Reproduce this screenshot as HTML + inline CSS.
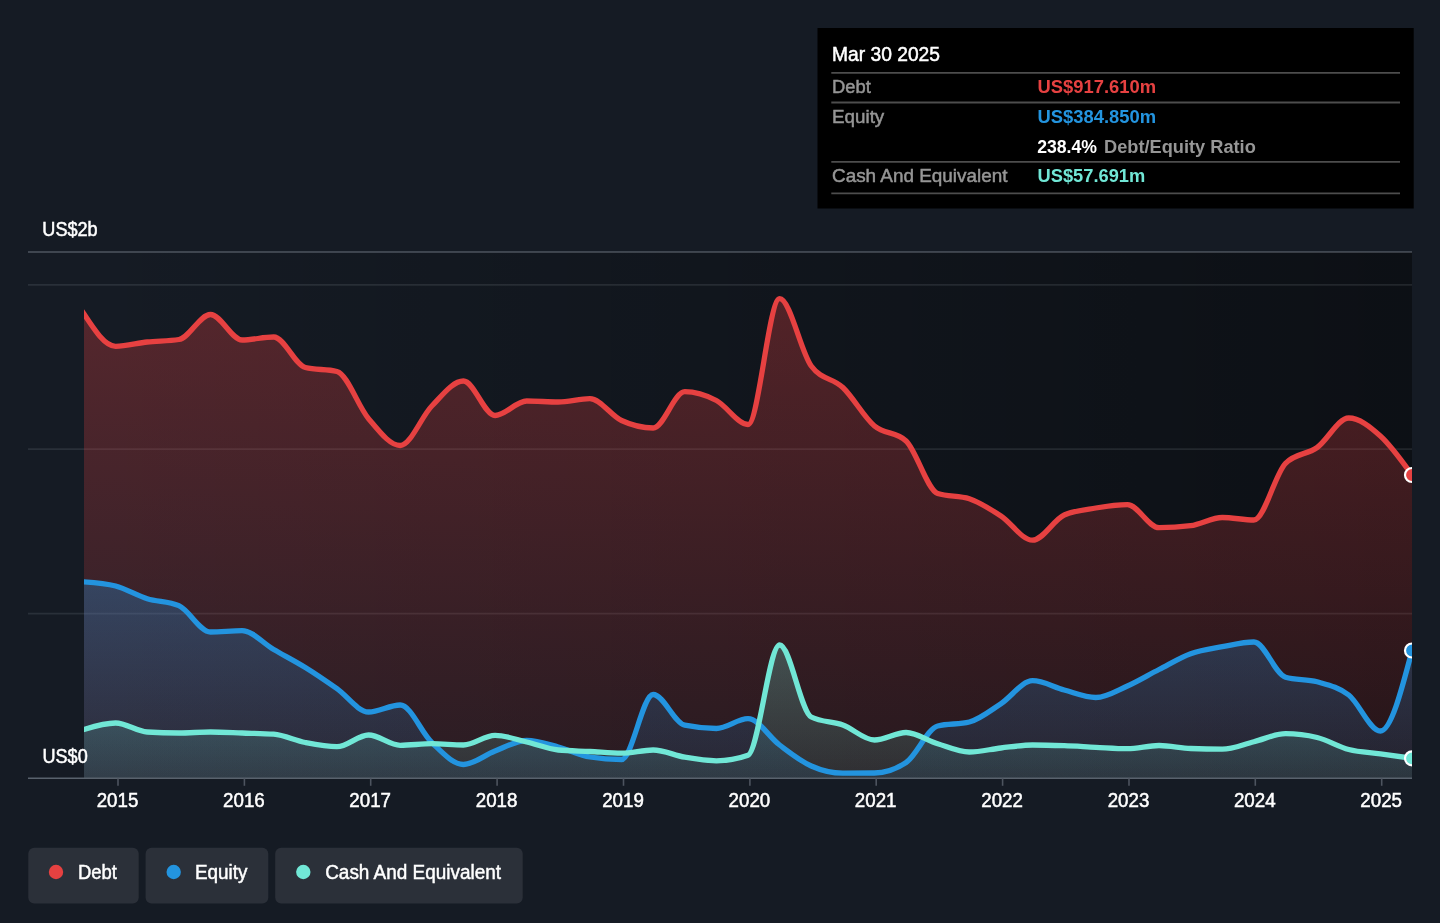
<!DOCTYPE html>
<html><head><meta charset="utf-8"><title>Debt to Equity History</title>
<style>
html,body{margin:0;padding:0;background:#151b24;}
body{width:1440px;height:923px;overflow:hidden;font-family:"Liberation Sans",sans-serif;}
svg{display:block;font-family:"Liberation Sans",sans-serif;will-change:transform;transform:translateZ(0);}
text{-webkit-font-smoothing:antialiased;}
.ax{fill:#ffffff;font-size:19.5px;stroke:#ffffff;stroke-width:0.5px;}
.lg{fill:#ffffff;font-size:19.4px;stroke:#ffffff;stroke-width:0.45px;}
.tl{fill:#969696;font-size:19.2px;stroke:#969696;stroke-width:0.5px;}
.tv{font-size:19.2px;font-weight:bold;}
</style></head>
<body>
<svg width="1440" height="923" viewBox="0 0 1440 923">
<defs>
<linearGradient id="pbg" x1="0" y1="0" x2="1" y2="0">
<stop offset="0" stop-color="#000" stop-opacity="0"/>
<stop offset="0.04" stop-color="#000" stop-opacity="0"/>
<stop offset="1" stop-color="#000" stop-opacity="0.42"/>
</linearGradient>
<linearGradient id="gd" gradientUnits="userSpaceOnUse" x1="0" y1="298" x2="0" y2="778">
<stop offset="0" stop-color="#e64141" stop-opacity="0.31"/>
<stop offset="1" stop-color="#e64141" stop-opacity="0.11"/>
</linearGradient>
<linearGradient id="ge" gradientUnits="userSpaceOnUse" x1="0" y1="582" x2="0" y2="778">
<stop offset="0" stop-color="#2394df" stop-opacity="0.30"/>
<stop offset="1" stop-color="#2394df" stop-opacity="0.10"/>
</linearGradient>
<linearGradient id="gc" gradientUnits="userSpaceOnUse" x1="0" y1="645" x2="0" y2="778">
<stop offset="0" stop-color="#71e7d6" stop-opacity="0.26"/>
<stop offset="1" stop-color="#71e7d6" stop-opacity="0.10"/>
</linearGradient>
<clipPath id="pc"><rect x="84" y="245" width="1328" height="540"/></clipPath>
</defs>
<rect x="0" y="0" width="1440" height="923" fill="#151b24"/>
<!-- plot bg -->
<rect x="28" y="252" width="1384" height="526" fill="url(#pbg)"/>
<!-- grid -->
<g stroke="#dfe8f5" stroke-width="1.8">
<line x1="28" x2="1412" y1="252" y2="252" stroke-opacity="0.21"/>
<line x1="28" x2="1412" y1="284.9" y2="284.9" stroke-opacity="0.10"/>
<line x1="28" x2="1412" y1="449.1" y2="449.1" stroke-opacity="0.10"/>
<line x1="28" x2="1412" y1="613.7" y2="613.7" stroke-opacity="0.10"/>
</g>
<g clip-path="url(#pc)">
<path d="M80.00,307.87L84.00,314.00C94.54,330.15 105.08,346.30 115.62,346.30C126.16,346.30 136.70,343.13 147.24,342.00C157.78,340.87 168.32,341.17 178.86,339.50C189.40,337.83 199.94,314.50 210.48,314.50C221.02,314.50 231.56,340.00 242.10,340.00C252.63,340.00 263.17,337.00 273.71,337.00C284.25,337.00 294.79,364.83 305.33,367.50C315.87,370.17 326.41,368.83 336.95,371.50C347.49,374.17 358.03,406.37 368.57,418.70C379.11,431.03 389.65,445.50 400.19,445.50C410.73,445.50 421.27,416.75 431.81,406.00C442.35,395.25 452.89,381.00 463.43,381.00C473.97,381.00 484.51,415.50 495.05,415.50C505.59,415.50 516.13,401.00 526.67,401.00C537.21,401.00 547.75,402.00 558.29,402.00C568.83,402.00 579.37,398.70 589.90,398.70C600.44,398.70 610.98,415.62 621.52,420.50C632.06,425.38 642.60,428.00 653.14,428.00C663.68,428.00 674.22,391.70 684.76,391.70C695.30,391.70 705.84,395.03 716.38,400.50C726.92,405.97 737.46,424.50 748.00,424.50C758.54,424.50 769.08,298.70 779.62,298.70C790.16,298.70 800.70,351.67 811.24,366.00C821.78,380.33 832.32,377.50 842.86,387.50C853.40,397.50 863.94,417.08 874.48,426.00C885.02,434.92 895.56,431.00 906.10,441.00C916.63,451.00 927.17,490.03 937.71,493.50C948.25,496.97 958.79,495.23 969.33,498.70C979.87,502.17 990.41,509.08 1000.95,516.00C1011.49,522.92 1022.03,540.20 1032.57,540.20C1043.11,540.20 1053.65,519.67 1064.19,515.00C1074.73,510.33 1085.27,509.72 1095.81,508.00C1106.35,506.28 1116.89,504.70 1127.43,504.70C1137.97,504.70 1148.51,527.70 1159.05,527.70C1169.59,527.70 1180.13,527.03 1190.67,525.70C1201.21,524.37 1211.75,517.50 1222.29,517.50C1232.83,517.50 1243.37,520.00 1253.90,520.00C1264.44,520.00 1274.98,473.83 1285.52,463.30C1296.06,452.77 1306.60,455.05 1317.14,447.50C1327.68,439.95 1338.22,418.00 1348.76,418.00C1359.30,418.00 1369.84,426.50 1380.38,436.00C1390.92,445.50 1401.46,460.25 1412.00,475.00L1412.00,778L84.00,778Z" fill="url(#gd)"/>
<path d="M80.00,581.53L84.00,581.80C94.54,582.50 105.08,583.20 115.62,586.00C126.16,588.80 136.70,595.42 147.24,598.70C157.78,601.98 168.32,601.03 178.86,605.70C189.40,610.37 199.94,632.00 210.48,632.00C221.02,632.00 231.56,630.70 242.10,630.70C252.63,630.70 263.17,643.37 273.71,649.50C284.25,655.63 294.79,660.97 305.33,667.50C315.87,674.03 326.41,681.28 336.95,688.70C347.49,696.12 358.03,712.00 368.57,712.00C379.11,712.00 389.65,705.00 400.19,705.00C410.73,705.00 421.27,732.58 431.81,742.50C442.35,752.42 452.89,764.50 463.43,764.50C473.97,764.50 484.51,755.00 495.05,751.00C505.59,747.00 516.13,740.50 526.67,740.50C537.21,740.50 547.75,744.25 558.29,747.00C568.83,749.75 579.37,755.33 589.90,757.00C600.44,758.67 610.98,759.50 621.52,759.50C632.06,759.50 642.60,694.50 653.14,694.50C663.68,694.50 674.22,723.00 684.76,725.20C695.30,727.40 705.84,728.50 716.38,728.50C726.92,728.50 737.46,718.70 748.00,718.70C758.54,718.70 769.08,737.12 779.62,745.00C790.16,752.88 800.70,761.30 811.24,766.00C821.78,770.70 832.32,773.20 842.86,773.20C853.40,773.20 863.94,773.13 874.48,773.00C885.02,772.87 895.56,769.50 906.10,762.50C916.63,755.50 927.17,728.67 937.71,726.00C948.25,723.33 958.79,724.67 969.33,722.00C979.87,719.33 990.41,710.58 1000.95,703.70C1011.49,696.82 1022.03,680.70 1032.57,680.70C1043.11,680.70 1053.65,687.20 1064.19,690.00C1074.73,692.80 1085.27,697.50 1095.81,697.50C1106.35,697.50 1116.89,690.67 1127.43,686.00C1137.97,681.33 1148.51,674.88 1159.05,669.50C1169.59,664.12 1180.13,657.50 1190.67,653.70C1201.21,649.90 1211.75,648.65 1222.29,646.70C1232.83,644.75 1243.37,642.00 1253.90,642.00C1264.44,642.00 1274.98,674.13 1285.52,677.20C1296.06,680.27 1306.60,678.83 1317.14,681.80C1327.68,684.77 1338.22,686.80 1348.76,695.00C1359.30,703.20 1369.84,731.00 1380.38,731.00C1390.92,731.00 1401.46,690.75 1412.00,650.50L1412.00,778L84.00,778Z" fill="url(#ge)"/>
<path d="M80.00,730.61L84.00,729.40C94.54,726.20 105.08,723.00 115.62,723.00C126.16,723.00 136.70,731.33 147.24,732.00C157.78,732.67 168.32,733.00 178.86,733.00C189.40,733.00 199.94,732.00 210.48,732.00C221.02,732.00 231.56,732.63 242.10,733.00C252.63,733.37 263.17,733.40 273.71,734.20C284.25,735.00 294.79,740.42 305.33,742.50C315.87,744.58 326.41,746.70 336.95,746.70C347.49,746.70 358.03,735.00 368.57,735.00C379.11,735.00 389.65,745.30 400.19,745.30C410.73,745.30 421.27,743.70 431.81,743.70C442.35,743.70 452.89,745.00 463.43,745.00C473.97,745.00 484.51,735.30 495.05,735.30C505.59,735.30 516.13,739.55 526.67,742.00C537.21,744.45 547.75,749.00 558.29,750.00C568.83,751.00 579.37,750.97 589.90,751.50C600.44,752.03 610.98,753.20 621.52,753.20C632.06,753.20 642.60,750.00 653.14,750.00C663.68,750.00 674.22,755.40 684.76,757.20C695.30,759.00 705.84,760.80 716.38,760.80C726.92,760.80 737.46,758.93 748.00,755.20C758.54,751.47 769.08,645.00 779.62,645.00C790.16,645.00 800.70,711.67 811.24,717.00C821.78,722.33 832.32,721.17 842.86,725.00C853.40,728.83 863.94,740.00 874.48,740.00C885.02,740.00 895.56,732.50 906.10,732.50C916.63,732.50 927.17,740.45 937.71,743.70C948.25,746.95 958.79,752.00 969.33,752.00C979.87,752.00 990.41,749.17 1000.95,748.00C1011.49,746.83 1022.03,745.00 1032.57,745.00C1043.11,745.00 1053.65,745.32 1064.19,745.70C1074.73,746.08 1085.27,746.80 1095.81,747.30C1106.35,747.80 1116.89,748.70 1127.43,748.70C1137.97,748.70 1148.51,745.50 1159.05,745.50C1169.59,745.50 1180.13,748.03 1190.67,748.50C1201.21,748.97 1211.75,749.20 1222.29,749.20C1232.83,749.20 1243.37,744.28 1253.90,741.70C1264.44,739.12 1274.98,733.70 1285.52,733.70C1296.06,733.70 1306.60,734.97 1317.14,737.50C1327.68,740.03 1338.22,746.78 1348.76,749.50C1359.30,752.22 1369.84,752.33 1380.38,753.80C1390.92,755.27 1401.46,756.78 1412.00,758.30L1412.00,778L84.00,778Z" fill="url(#gc)"/>
<path d="M80.00,307.87L84.00,314.00C94.54,330.15 105.08,346.30 115.62,346.30C126.16,346.30 136.70,343.13 147.24,342.00C157.78,340.87 168.32,341.17 178.86,339.50C189.40,337.83 199.94,314.50 210.48,314.50C221.02,314.50 231.56,340.00 242.10,340.00C252.63,340.00 263.17,337.00 273.71,337.00C284.25,337.00 294.79,364.83 305.33,367.50C315.87,370.17 326.41,368.83 336.95,371.50C347.49,374.17 358.03,406.37 368.57,418.70C379.11,431.03 389.65,445.50 400.19,445.50C410.73,445.50 421.27,416.75 431.81,406.00C442.35,395.25 452.89,381.00 463.43,381.00C473.97,381.00 484.51,415.50 495.05,415.50C505.59,415.50 516.13,401.00 526.67,401.00C537.21,401.00 547.75,402.00 558.29,402.00C568.83,402.00 579.37,398.70 589.90,398.70C600.44,398.70 610.98,415.62 621.52,420.50C632.06,425.38 642.60,428.00 653.14,428.00C663.68,428.00 674.22,391.70 684.76,391.70C695.30,391.70 705.84,395.03 716.38,400.50C726.92,405.97 737.46,424.50 748.00,424.50C758.54,424.50 769.08,298.70 779.62,298.70C790.16,298.70 800.70,351.67 811.24,366.00C821.78,380.33 832.32,377.50 842.86,387.50C853.40,397.50 863.94,417.08 874.48,426.00C885.02,434.92 895.56,431.00 906.10,441.00C916.63,451.00 927.17,490.03 937.71,493.50C948.25,496.97 958.79,495.23 969.33,498.70C979.87,502.17 990.41,509.08 1000.95,516.00C1011.49,522.92 1022.03,540.20 1032.57,540.20C1043.11,540.20 1053.65,519.67 1064.19,515.00C1074.73,510.33 1085.27,509.72 1095.81,508.00C1106.35,506.28 1116.89,504.70 1127.43,504.70C1137.97,504.70 1148.51,527.70 1159.05,527.70C1169.59,527.70 1180.13,527.03 1190.67,525.70C1201.21,524.37 1211.75,517.50 1222.29,517.50C1232.83,517.50 1243.37,520.00 1253.90,520.00C1264.44,520.00 1274.98,473.83 1285.52,463.30C1296.06,452.77 1306.60,455.05 1317.14,447.50C1327.68,439.95 1338.22,418.00 1348.76,418.00C1359.30,418.00 1369.84,426.50 1380.38,436.00C1390.92,445.50 1401.46,460.25 1412.00,475.00" fill="none" stroke="#e64141" stroke-width="5.3" stroke-linejoin="round"/>
<path d="M80.00,581.53L84.00,581.80C94.54,582.50 105.08,583.20 115.62,586.00C126.16,588.80 136.70,595.42 147.24,598.70C157.78,601.98 168.32,601.03 178.86,605.70C189.40,610.37 199.94,632.00 210.48,632.00C221.02,632.00 231.56,630.70 242.10,630.70C252.63,630.70 263.17,643.37 273.71,649.50C284.25,655.63 294.79,660.97 305.33,667.50C315.87,674.03 326.41,681.28 336.95,688.70C347.49,696.12 358.03,712.00 368.57,712.00C379.11,712.00 389.65,705.00 400.19,705.00C410.73,705.00 421.27,732.58 431.81,742.50C442.35,752.42 452.89,764.50 463.43,764.50C473.97,764.50 484.51,755.00 495.05,751.00C505.59,747.00 516.13,740.50 526.67,740.50C537.21,740.50 547.75,744.25 558.29,747.00C568.83,749.75 579.37,755.33 589.90,757.00C600.44,758.67 610.98,759.50 621.52,759.50C632.06,759.50 642.60,694.50 653.14,694.50C663.68,694.50 674.22,723.00 684.76,725.20C695.30,727.40 705.84,728.50 716.38,728.50C726.92,728.50 737.46,718.70 748.00,718.70C758.54,718.70 769.08,737.12 779.62,745.00C790.16,752.88 800.70,761.30 811.24,766.00C821.78,770.70 832.32,773.20 842.86,773.20C853.40,773.20 863.94,773.13 874.48,773.00C885.02,772.87 895.56,769.50 906.10,762.50C916.63,755.50 927.17,728.67 937.71,726.00C948.25,723.33 958.79,724.67 969.33,722.00C979.87,719.33 990.41,710.58 1000.95,703.70C1011.49,696.82 1022.03,680.70 1032.57,680.70C1043.11,680.70 1053.65,687.20 1064.19,690.00C1074.73,692.80 1085.27,697.50 1095.81,697.50C1106.35,697.50 1116.89,690.67 1127.43,686.00C1137.97,681.33 1148.51,674.88 1159.05,669.50C1169.59,664.12 1180.13,657.50 1190.67,653.70C1201.21,649.90 1211.75,648.65 1222.29,646.70C1232.83,644.75 1243.37,642.00 1253.90,642.00C1264.44,642.00 1274.98,674.13 1285.52,677.20C1296.06,680.27 1306.60,678.83 1317.14,681.80C1327.68,684.77 1338.22,686.80 1348.76,695.00C1359.30,703.20 1369.84,731.00 1380.38,731.00C1390.92,731.00 1401.46,690.75 1412.00,650.50" fill="none" stroke="#2394df" stroke-width="5.3" stroke-linejoin="round"/>
<path d="M80.00,730.61L84.00,729.40C94.54,726.20 105.08,723.00 115.62,723.00C126.16,723.00 136.70,731.33 147.24,732.00C157.78,732.67 168.32,733.00 178.86,733.00C189.40,733.00 199.94,732.00 210.48,732.00C221.02,732.00 231.56,732.63 242.10,733.00C252.63,733.37 263.17,733.40 273.71,734.20C284.25,735.00 294.79,740.42 305.33,742.50C315.87,744.58 326.41,746.70 336.95,746.70C347.49,746.70 358.03,735.00 368.57,735.00C379.11,735.00 389.65,745.30 400.19,745.30C410.73,745.30 421.27,743.70 431.81,743.70C442.35,743.70 452.89,745.00 463.43,745.00C473.97,745.00 484.51,735.30 495.05,735.30C505.59,735.30 516.13,739.55 526.67,742.00C537.21,744.45 547.75,749.00 558.29,750.00C568.83,751.00 579.37,750.97 589.90,751.50C600.44,752.03 610.98,753.20 621.52,753.20C632.06,753.20 642.60,750.00 653.14,750.00C663.68,750.00 674.22,755.40 684.76,757.20C695.30,759.00 705.84,760.80 716.38,760.80C726.92,760.80 737.46,758.93 748.00,755.20C758.54,751.47 769.08,645.00 779.62,645.00C790.16,645.00 800.70,711.67 811.24,717.00C821.78,722.33 832.32,721.17 842.86,725.00C853.40,728.83 863.94,740.00 874.48,740.00C885.02,740.00 895.56,732.50 906.10,732.50C916.63,732.50 927.17,740.45 937.71,743.70C948.25,746.95 958.79,752.00 969.33,752.00C979.87,752.00 990.41,749.17 1000.95,748.00C1011.49,746.83 1022.03,745.00 1032.57,745.00C1043.11,745.00 1053.65,745.32 1064.19,745.70C1074.73,746.08 1085.27,746.80 1095.81,747.30C1106.35,747.80 1116.89,748.70 1127.43,748.70C1137.97,748.70 1148.51,745.50 1159.05,745.50C1169.59,745.50 1180.13,748.03 1190.67,748.50C1201.21,748.97 1211.75,749.20 1222.29,749.20C1232.83,749.20 1243.37,744.28 1253.90,741.70C1264.44,739.12 1274.98,733.70 1285.52,733.70C1296.06,733.70 1306.60,734.97 1317.14,737.50C1327.68,740.03 1338.22,746.78 1348.76,749.50C1359.30,752.22 1369.84,752.33 1380.38,753.80C1390.92,755.27 1401.46,756.78 1412.00,758.30" fill="none" stroke="#71e7d6" stroke-width="5.3" stroke-linejoin="round"/>
<circle cx="1412" cy="475.00" r="7" fill="#e64141" stroke="#fff" stroke-width="2.2"/>
<circle cx="1412" cy="650.50" r="7" fill="#2394df" stroke="#fff" stroke-width="2.2"/>
<circle cx="1412" cy="758.30" r="7" fill="#71e7d6" stroke="#fff" stroke-width="2.2"/>
</g>
<!-- axis -->
<line x1="28" x2="1412" y1="778.3" y2="778.3" stroke="#59626d" stroke-width="1.5"/>
<g stroke="#4d545f" stroke-width="1.6">
<line x1="118" x2="118" y1="778.3" y2="785.8"/>
<line x1="244.4" x2="244.4" y1="778.3" y2="785.8"/>
<line x1="370.7" x2="370.7" y1="778.3" y2="785.8"/>
<line x1="497.1" x2="497.1" y1="778.3" y2="785.8"/>
<line x1="623.5" x2="623.5" y1="778.3" y2="785.8"/>
<line x1="749.9" x2="749.9" y1="778.3" y2="785.8"/>
<line x1="876.2" x2="876.2" y1="778.3" y2="785.8"/>
<line x1="1002.6" x2="1002.6" y1="778.3" y2="785.8"/>
<line x1="1129" x2="1129" y1="778.3" y2="785.8"/>
<line x1="1255.3" x2="1255.3" y1="778.3" y2="785.8"/>
<line x1="1381.7" x2="1381.7" y1="778.3" y2="785.8"/>
</g>
<g class="ax" text-anchor="middle">
<text x="117.5" y="806.9" textLength="41.7" lengthAdjust="spacingAndGlyphs">2015</text>
<text x="243.9" y="806.9" textLength="41.7" lengthAdjust="spacingAndGlyphs">2016</text>
<text x="370.2" y="806.9" textLength="41.7" lengthAdjust="spacingAndGlyphs">2017</text>
<text x="496.6" y="806.9" textLength="41.7" lengthAdjust="spacingAndGlyphs">2018</text>
<text x="623" y="806.9" textLength="41.7" lengthAdjust="spacingAndGlyphs">2019</text>
<text x="749.4" y="806.9" textLength="41.7" lengthAdjust="spacingAndGlyphs">2020</text>
<text x="875.7" y="806.9" textLength="41.7" lengthAdjust="spacingAndGlyphs">2021</text>
<text x="1002.1" y="806.9" textLength="41.7" lengthAdjust="spacingAndGlyphs">2022</text>
<text x="1128.5" y="806.9" textLength="41.7" lengthAdjust="spacingAndGlyphs">2023</text>
<text x="1254.8" y="806.9" textLength="41.7" lengthAdjust="spacingAndGlyphs">2024</text>
<text x="1381.2" y="806.9" textLength="41.7" lengthAdjust="spacingAndGlyphs">2025</text>
</g>
<text class="ax" x="42.3" y="236.4" textLength="55.4" lengthAdjust="spacingAndGlyphs">US$2b</text>
<text class="ax" x="42.5" y="762.8" textLength="45.2" lengthAdjust="spacingAndGlyphs">US$0</text>
<!-- legend -->
<rect x="28.3" y="847.7" width="110.4" height="55.8" rx="6" fill="#2b3039"/>
<rect x="145.6" y="847.7" width="122.7" height="55.8" rx="6" fill="#2b3039"/>
<rect x="275.2" y="847.7" width="247.5" height="55.8" rx="6" fill="#2b3039"/>
<circle cx="56" cy="872" r="7.2" fill="#e64141"/>
<circle cx="173.7" cy="872" r="7.2" fill="#2394df"/>
<circle cx="303.3" cy="872" r="7.2" fill="#71e7d6"/>
<text class="lg" x="77.9" y="878.5" textLength="39" lengthAdjust="spacingAndGlyphs">Debt</text>
<text class="lg" x="195" y="878.5" textLength="52.5" lengthAdjust="spacingAndGlyphs">Equity</text>
<text class="lg" x="325.2" y="878.5" textLength="175.8" lengthAdjust="spacingAndGlyphs">Cash And Equivalent</text>
<!-- tooltip -->
<rect x="817.5" y="28" width="596.2" height="180.5" fill="#000000"/>
<g stroke="#ffffff" stroke-opacity="0.3" stroke-width="1.8">
<line x1="831.3" x2="1400" y1="72.8" y2="72.8"/>
<line x1="831.3" x2="1400" y1="102.5" y2="102.5"/>
<line x1="831.3" x2="1400" y1="161.9" y2="161.9"/>
<line x1="831.3" x2="1400" y1="193.4" y2="193.4"/>
</g>
<text x="832" y="61.3" fill="#ffffff" stroke="#ffffff" stroke-width="0.5" style="font-size:19.7px" textLength="108" lengthAdjust="spacingAndGlyphs">Mar 30 2025</text>
<text class="tl" x="832" y="92.8" textLength="38.75" lengthAdjust="spacingAndGlyphs">Debt</text>
<text class="tl" x="832" y="122.6" textLength="52.25" lengthAdjust="spacingAndGlyphs">Equity</text>
<text class="tl" x="832" y="181.6" textLength="175.5" lengthAdjust="spacingAndGlyphs">Cash And Equivalent</text>
<text class="tv" x="1037.5" y="92.6" fill="#e64141" textLength="118.6" lengthAdjust="spacingAndGlyphs">US$917.610m</text>
<text class="tv" x="1037.5" y="122.6" fill="#2394df" textLength="118.6" lengthAdjust="spacingAndGlyphs">US$384.850m</text>
<text class="tv" x="1037.2" y="152.5" fill="#ffffff" textLength="59.8" lengthAdjust="spacingAndGlyphs">238.4%</text>
<text class="tv" x="1104" y="152.5" fill="#969696" textLength="151.8" lengthAdjust="spacingAndGlyphs">Debt/Equity Ratio</text>
<text class="tv" x="1037.5" y="181.8" fill="#71e7d6" textLength="107.8" lengthAdjust="spacingAndGlyphs">US$57.691m</text>
</svg>
</body></html>
